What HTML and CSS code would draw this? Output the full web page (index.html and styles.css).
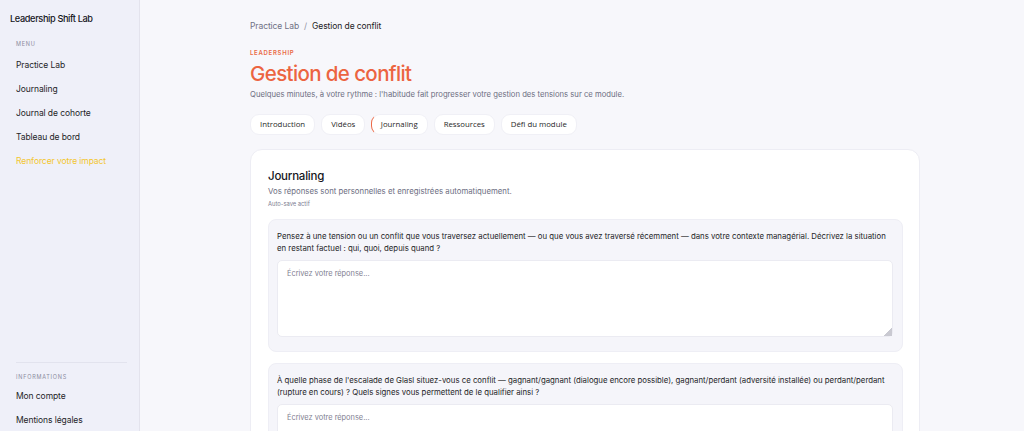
FILE: index.html
```html
<!DOCTYPE html>
<html lang="fr">
<head>
<meta charset="utf-8">
<title>Gestion de conflit</title>
<link rel="stylesheet" href="styles.css">
</head>
<body>
<div class="app">
  <aside class="sidebar">
    <div class="brand">Leadership Shift Lab</div>
    <div class="nav-label">Menu</div>
    <nav class="nav">
      <a class="nav-item">Practice Lab</a>
      <a class="nav-item">Journaling</a>
      <a class="nav-item">Journal de cohorte</a>
      <a class="nav-item">Tableau de bord</a>
      <a class="nav-item nav-highlight">Renforcer votre impact</a>
    </nav>
    <div class="sidebar-bottom">
      <div class="nav-label">Informations</div>
      <nav class="nav">
        <a class="nav-item">Mon compte</a>
        <a class="nav-item">Mentions légales</a>
      </nav>
    </div>
  </aside>
  <main class="main">
    <div class="container">
      <div class="breadcrumb"><span class="crumb-muted">Practice Lab</span><span class="crumb-sep">/</span><span class="crumb-current">Gestion de conflit</span></div>
      <div class="eyebrow">Leadership</div>
      <h1 class="title">Gestion de conflit</h1>
      <p class="subtitle">Quelques minutes, à votre rythme : l'habitude fait progresser votre gestion des tensions sur ce module.</p>
      <div class="tabs">
        <button class="tab">Introduction</button>
        <button class="tab">Vidéos</button>
        <button class="tab tab-active">Journaling</button>
        <button class="tab">Ressources</button>
        <button class="tab">Défi du module</button>
      </div>
      <section class="card">
        <h2 class="card-title">Journaling</h2>
        <p class="card-desc">Vos réponses sont personnelles et enregistrées automatiquement.</p>
        <p class="card-note">Auto-save actif</p>
        <div class="question">
          <p class="question-text">Pensez à une tension ou un conflit que vous traversez actuellement — ou que vous avez traversé récemment — dans votre contexte managérial. Décrivez la situation en restant factuel : qui, quoi, depuis quand ?</p>
          <textarea class="answer" placeholder="Écrivez votre réponse..."></textarea>
        </div>
        <div class="question">
          <p class="question-text">À quelle phase de l'escalade de Glasl situez-vous ce conflit — gagnant/gagnant (dialogue encore possible), gagnant/perdant (adversité installée) ou perdant/perdant (rupture en cours) ? Quels signes vous permettent de le qualifier ainsi ?</p>
          <textarea class="answer" placeholder="Écrivez votre réponse..."></textarea>
        </div>
      </section>
    </div>
  </main>
</div>
</body>
</html>
```

FILE: styles.css
```css
* { box-sizing: border-box; }
html, body {
  margin: 0;
  height: 100%;
  overflow: hidden;
}
body {
  font-family: Inter, "Noto Sans", "Liberation Sans", sans-serif;
  color: #1b1b24;
  background: #f7f7fb;
}
.app {
  display: flex;
  height: 100vh;
}
.sidebar {
  width: 140px;
  flex: none;
  background: #eff0f9;
  border-right: 1px solid #e3e3ed;
  display: flex;
  flex-direction: column;
  padding: 13px 12px 0 10px;
}
.brand {
  font-size: 9.2px;
  font-weight: 500;
  letter-spacing: -0.04em;
  color: #15151c;
  line-height: 12px;
  margin-bottom: 15px;
}
.nav-label {
  font-size: 5.5px;
  text-transform: uppercase;
  letter-spacing: 0.14em;
  color: #8b8c9e;
  padding-left: 6px;
  line-height: 8px;
  margin-bottom: 11px;
}
.nav {
  display: flex;
  flex-direction: column;
  gap: 12px;
  padding-left: 6px;
}
.nav-item {
  font-size: 8.5px;
  line-height: 12px;
  color: #1e1e28;
  letter-spacing: -0.01em;
}
.nav-highlight {
  color: #f3c62e;
}
.sidebar-bottom {
  margin-top: auto;
  border-top: 1px solid #e2e3ee;
  margin-left: 6px;
  padding-top: 10px;
  padding-bottom: 5px;
}
.sidebar-bottom .nav-label {
  padding-left: 0;
  margin-bottom: 9px;
}
.sidebar-bottom .nav {
  padding-left: 0;
}
.main {
  flex: 1;
  overflow: hidden;
}
.container {
  width: 670px;
  margin-left: 110px;
  padding-top: 20px;
}
.breadcrumb {
  font-size: 8.5px;
  line-height: 12px;
  letter-spacing: -0.01em;
  display: flex;
  gap: 5px;
}
.crumb-muted { color: #6f7084; }
.crumb-sep { color: #8f90a2; }
.crumb-current { color: #1b1b24; }
.eyebrow {
  margin-top: 17px;
  font-size: 6px;
  font-weight: 600;
  letter-spacing: 0.12em;
  text-transform: uppercase;
  color: #ea6a45;
  line-height: 8px;
}
.title {
  margin: 5px 0 0;
  font-size: 20.5px;
  font-weight: 500;
  letter-spacing: -0.03em;
  color: #ec6441;
  line-height: 24px;
}
.subtitle {
  margin: 4px 0 0;
  font-size: 7.7px;
  line-height: 10px;
  color: #6d6e82;
}
.tabs {
  display: flex;
  gap: 6px;
  margin-top: 14px;
}
.tab {
  font-family: "Open Sans", Inter, sans-serif;
  font-size: 7.8px;
  font-weight: 500;
  color: #1f1f28;
  background: #ffffff;
  border: 1px solid #f0f0f6;
  border-radius: 9px;
  height: 21px;
  padding: 0 9px;
  line-height: 19px;
}
.tab-active {
  border-left: 1.5px solid #ec6a48;
  padding-left: 8.5px;
}
.card {
  margin-top: 14px;
  background: #ffffff;
  border: 1px solid #ededf4;
  border-radius: 12px;
  padding: 19px 16px 0 17px;
}
.card-title {
  margin: 0;
  font-size: 11.5px;
  font-weight: 500;
  letter-spacing: -0.02em;
  line-height: 14px;
  color: #15151c;
}
.card-desc {
  margin: 3px 0 0;
  font-size: 7.8px;
  line-height: 10px;
  color: #6d6e82;
}
.card-note {
  margin: 4px 0 0;
  font-size: 5.8px;
  line-height: 8px;
  color: #7c7d90;
}
.question {
  margin-top: 11px;
  background: #f5f5fa;
  border: 1px solid #eeeef5;
  border-radius: 8px;
  padding: 10px 9px 14px 8px;
  display: flex;
  flex-direction: column;
}
.question + .question {
  margin-top: 11px;
}
.question-text {
  margin: 0;
  font-size: 7.8px;
  line-height: 12px;
  color: #1e1e28;
}
.answer {
  display: block;
  margin-top: 6px;
  height: 77px;
  width: 100%;
  font-family: Inter, "Noto Sans", sans-serif;
  font-size: 7.4px;
  color: #2a2a34;
  background: #ffffff;
  border: 1px solid #ebebf2;
  border-radius: 5px;
  padding: 8px 9px;
  resize: vertical;
  outline: none;
}
.answer::placeholder {
  color: #7f8092;
}
.answer::-webkit-resizer {
  background: linear-gradient(135deg, transparent 0, transparent 72%, #c9c9d1 72%, #c9c9d1 100%);
}
```
